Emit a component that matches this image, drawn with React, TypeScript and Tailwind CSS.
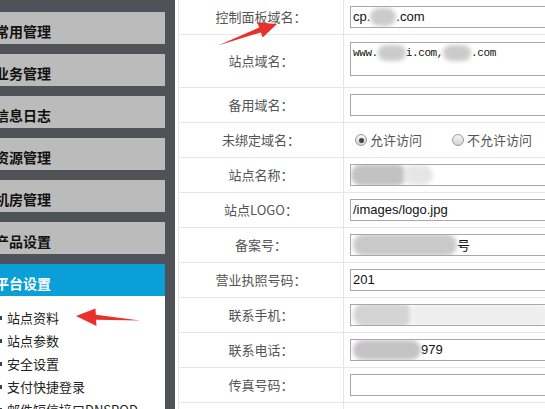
import React from 'react';

const menus = ['常用管理', '业务管理', '信息日志', '资源管理', '机房管理', '产品设置'];
const subItems = ['站点资料', '站点参数', '安全设置', '支付快捷登录', '邮件短信接口DNSPOD'];

const cjk = { fontFamily: '"Noto Sans CJK SC", "Noto Sans", sans-serif' };
const arial = { fontFamily: '"Liberation Sans", Arial, "Noto Sans CJK SC", sans-serif' };
const mono = { fontFamily: '"Liberation Mono", "Courier New", monospace' };

// blurred (masked) part of a value
const Blur = ({ w, h = 20, c = 'bg-[#cbcbcb]' }: { w: number; h?: number; c?: string }) => (
  <span
    className={`inline-block align-middle rounded-full blur-[2px] ${c}`}
    style={{ width: w, height: h }}
  />
);

const Row = ({ label, h = 'h-[35px]', children }: { label: string; h?: string; children?: React.ReactNode }) => (
  <div className={`flex border-b border-[#e6e6e6] ${h}`}>
    <div
      className="w-[165px] shrink-0 flex items-center justify-center border-r border-[#e6e6e6] text-[13px] text-[#555]"
      style={cjk}
    >
      {label}
    </div>
    <div className="flex-1 flex items-center pl-[6px]">{children}</div>
  </div>
);

const Input = ({ children }: { children?: React.ReactNode }) => (
  <div
    className="w-[320px] h-[22px] border border-[#a8a8a8] bg-white flex items-center pl-[2px] text-[13px] text-[#111] whitespace-nowrap overflow-hidden"
    style={arial}
  >
    {children}
  </div>
);

const Radio = ({ checked, label }: { checked?: boolean; label: string }) => (
  <label className="flex items-center gap-[3px] text-[13px] text-[#555]" style={cjk}>
    <span className="w-[12px] h-[12px] rounded-full border border-[#9a9a9a] bg-gradient-to-b from-[#f4f4f4] to-[#d4d4d4] flex items-center justify-center">
      {checked && <span className="w-[5px] h-[5px] rounded-full bg-[#444]" />}
    </span>
    {label}
  </label>
);

export default function App() {
  return (
    <div className="relative w-[545px] h-[409px] overflow-hidden flex bg-white">
      {/* sidebar */}
      <div className="w-[175px] shrink-0 bg-[#4f5256] pt-[12px] pr-[10px] flex flex-col">
        {menus.map((m) => (
          <div
            key={m}
            className="shrink-0 h-[32px] mb-[10px] bg-[#bbbbbb] flex items-center pt-[6px] text-[14px] font-bold text-[#111] whitespace-nowrap"
            style={cjk}
          >
            <span className="-ml-[5px]">{m}</span>
          </div>
        ))}
        <div
          className="shrink-0 h-[32px] bg-[#0a9fd6] flex items-center pt-[7px] text-[14px] font-bold text-white whitespace-nowrap"
          style={cjk}
        >
          <span className="-ml-[5px]">平台设置</span>
        </div>
        <div className="flex-1 shrink-0 bg-white pt-[10px] flex flex-col">
          {subItems.map((s) => (
            <div key={s} className="shrink-0 h-[23px] flex items-center gap-[5px] text-[13px] text-[#222] whitespace-nowrap" style={cjk}>
              <span className="w-[2px] h-[4px] bg-[#334455]" />
              {s}
            </div>
          ))}
        </div>
      </div>

      {/* main form */}
      <div className="flex-1 pl-[3px] overflow-hidden">
        <div className="w-[420px] border-l border-[#e6e6e6]">
          <Row label="控制面板域名：">
            <Input>
              cp.<Blur w={26} h={18} />.com
            </Input>
          </Row>
          <Row label="站点域名：" h="h-[53px]">
            <div
              className="w-[320px] h-[34px] border border-[#a8a8a8] self-start mt-[7px] pt-[2px] pl-[2px] text-[11px] tracking-[-0.4px] text-[#111] whitespace-nowrap"
              style={mono}
            >
              www.<Blur w={28} h={16} />i.com,<Blur w={28} h={16} />.com
            </div>
          </Row>
          <Row label="备用域名：">
            <Input />
          </Row>
          <Row label="未绑定域名：">
            <div className="flex items-center gap-[30px] pl-[5px]">
              <Radio checked label="允许访问" />
              <Radio label="不允许访问" />
            </div>
          </Row>
          <Row label="站点名称：">
            <Input>
              <span className="flex items-center -ml-[2px]">
                <Blur w={56} h={22} c="bg-[#c2c2c2]" />
                <Blur w={30} h={20} c="bg-[#e6e6e6] -ml-[4px]" />
              </span>
            </Input>
          </Row>
          <Row label="站点LOGO：">
            <Input>/images/logo.jpg</Input>
          </Row>
          <Row label="备案号：">
            <Input>
              <span className="flex items-center">
                <Blur w={104} h={22} c="bg-[#c9c9c9]" />
                <span style={cjk}>号</span>
              </span>
            </Input>
          </Row>
          <Row label="营业执照号码：">
            <Input>201</Input>
          </Row>
          <Row label="联系手机：">
            <Input>
              <span className="flex items-center">
                <Blur w={60} h={24} c="bg-[#d4d4d4]" />
                <Blur w={140} h={22} c="bg-[#eeeeee] -ml-[4px]" />
              </span>
            </Input>
          </Row>
          <Row label="联系电话：">
            <Input>
              <span className="flex items-center">
                <Blur w={68} h={20} c="bg-[#c4c2c4]" />
                979
              </span>
            </Input>
          </Row>
          <Row label="传真号码：">
            <Input />
          </Row>
          <Row label="" />
        </div>
      </div>

      {/* red annotation arrows */}
      <svg className="absolute inset-0 pointer-events-none" width="545" height="409" viewBox="0 0 545 409">
        <polygon
          points="277,24 262.7,37.5 260.8,32.4 218,45.5 259.2,27.6 257.3,22.5"
          fill="#e8312c"
        />
        <polygon
          points="76,316 96.5,326 96.1,319.7 140,320.5 95.9,314.7 95.5,308.5"
          fill="#e8312c"
        />
      </svg>
    </div>
  );
}
